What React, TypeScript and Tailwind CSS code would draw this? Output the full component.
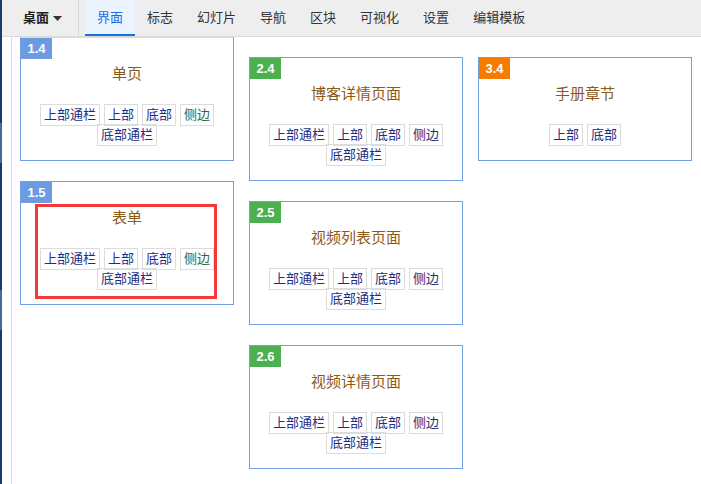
import React from 'react';

type Tag = { label: string; green?: boolean };

type CardData = {
  code: string;
  badge: string;
  title: string;
  tags: Tag[];
};

const FONT = { fontFamily: '"Liberation Sans", "Noto Sans CJK SC", sans-serif' };

const fullTags = (greenSide = false): Tag[] => [
  { label: '上部通栏' },
  { label: '上部' },
  { label: '底部' },
  { label: '侧边', green: greenSide },
  { label: '底部通栏' },
];

const tabs = ['界面', '标志', '幻灯片', '导航', '区块', '可视化', '设置', '编辑模板'];

const columns: { top: string; cards: CardData[] }[] = [
  {
    top: 'mt-0',
    cards: [
      { code: '1.4', badge: 'bg-[#6c9be2]', title: '单页', tags: fullTags(true) },
      { code: '1.5', badge: 'bg-[#6c9be2]', title: '表单', tags: fullTags(true) },
    ],
  },
  {
    top: 'mt-[20px]',
    cards: [
      { code: '2.4', badge: 'bg-[#4caf50]', title: '博客详情页面', tags: fullTags() },
      { code: '2.5', badge: 'bg-[#4caf50]', title: '视频列表页面', tags: fullTags() },
      { code: '2.6', badge: 'bg-[#4caf50]', title: '视频详情页面', tags: fullTags() },
    ],
  },
  {
    top: 'mt-[20px]',
    cards: [
      {
        code: '3.4',
        badge: 'bg-[#f57c00]',
        title: '手册章节',
        tags: [{ label: '上部' }, { label: '底部' }],
      },
    ],
  },
];

const TemplateCard: React.FC<{ card: CardData; first: boolean; highlight: boolean }> = ({
  card,
  first,
  highlight,
}) => (
  <div
    className={`relative border border-[#719ee0] bg-white pb-[15px] ${first && card.code === '1.4' ? 'border-t-[#dcdcdc]' : ''}`}
  >
    <div
      className={`absolute left-0 top-0 flex h-[21px] w-[31px] items-center justify-center text-[13px] font-bold text-white ${card.badge}`}
    >
      {card.code}
    </div>
    <div className="pt-[26px] text-center text-[15px] leading-[20px] text-[#8b5a16]">{card.title}</div>
    <div className="mt-[21px] px-2 text-center text-[13px] leading-[20px]">
      {card.tags.map((tag, i) => (
        <span
          key={i}
          className={`mx-[2px] -my-px inline-block h-[22px] border border-[#dcdcdc] px-[3px] align-top leading-[20px] ${tag.green ? 'text-[#2b6a3c]' : 'text-[#1c2f86]'}`}
        >
          {tag.label}
        </span>
      ))}
    </div>
    {highlight && (
      <div className="absolute left-[14px] top-[22px] h-[95px] w-[182px] border-[3px] border-[#f23a3a]" />
    )}
  </div>
);

export default function App() {
  return (
    <div className="flex h-[484px] w-[701px] overflow-hidden bg-white" style={FONT}>
      {/* left edge strip */}
      <div className="flex w-[2px] shrink-0 flex-col">
        <div className="h-[123px] bg-[#1b3a6b]" />
        <div className="h-[40px] bg-[#4a6a96]" />
        <div className="h-[127px] bg-[#1b3a6b]" />
        <div className="h-[40px] bg-[#4a6a96]" />
        <div className="flex-1 bg-[#1b3a6b]" />
      </div>

      <div className="flex min-w-0 flex-1 flex-col">
        {/* top bar */}
        <div className="flex h-[37px] shrink-0 items-stretch border-b border-[#d9d9d9] bg-[#eeeeee] text-[13px]">
          <div className="flex items-center gap-[4px] pl-[21px] pr-[16px] font-bold text-[#222]">
            <span>桌面</span>
            <svg width="9" height="5" viewBox="0 0 9 5">
              <path d="M0 0 L9 0 L4.5 5 Z" fill="#333" />
            </svg>
          </div>
          <div className="w-px bg-[#d6d6d6]" />
          <div className="ml-[6px] flex items-stretch">
            {tabs.map((t, i) => (
              <div
                key={t}
                className={`flex items-center px-3 ${i === 0 ? 'border-b-2 border-[#1a6fe0] bg-[#eaf3fe] pt-[2px] text-[#1a6fe0]' : 'text-[#333]'}`}
              >
                {t}
              </div>
            ))}
          </div>
        </div>

        {/* body */}
        <div className="flex flex-1 pl-[9px]">
          <div className="w-px shrink-0 bg-[#dcdcdc]" />
          <div className="flex items-start gap-[15px] pl-[8px]">
            {columns.map((col, ci) => (
              <div key={ci} className={`flex w-[214px] flex-col gap-[20px] ${col.top}`}>
                {col.cards.map((card, i) => (
                  <TemplateCard key={card.code} card={card} first={i === 0} highlight={card.code === '1.5'} />
                ))}
              </div>
            ))}
          </div>
        </div>
      </div>
    </div>
  );
}
